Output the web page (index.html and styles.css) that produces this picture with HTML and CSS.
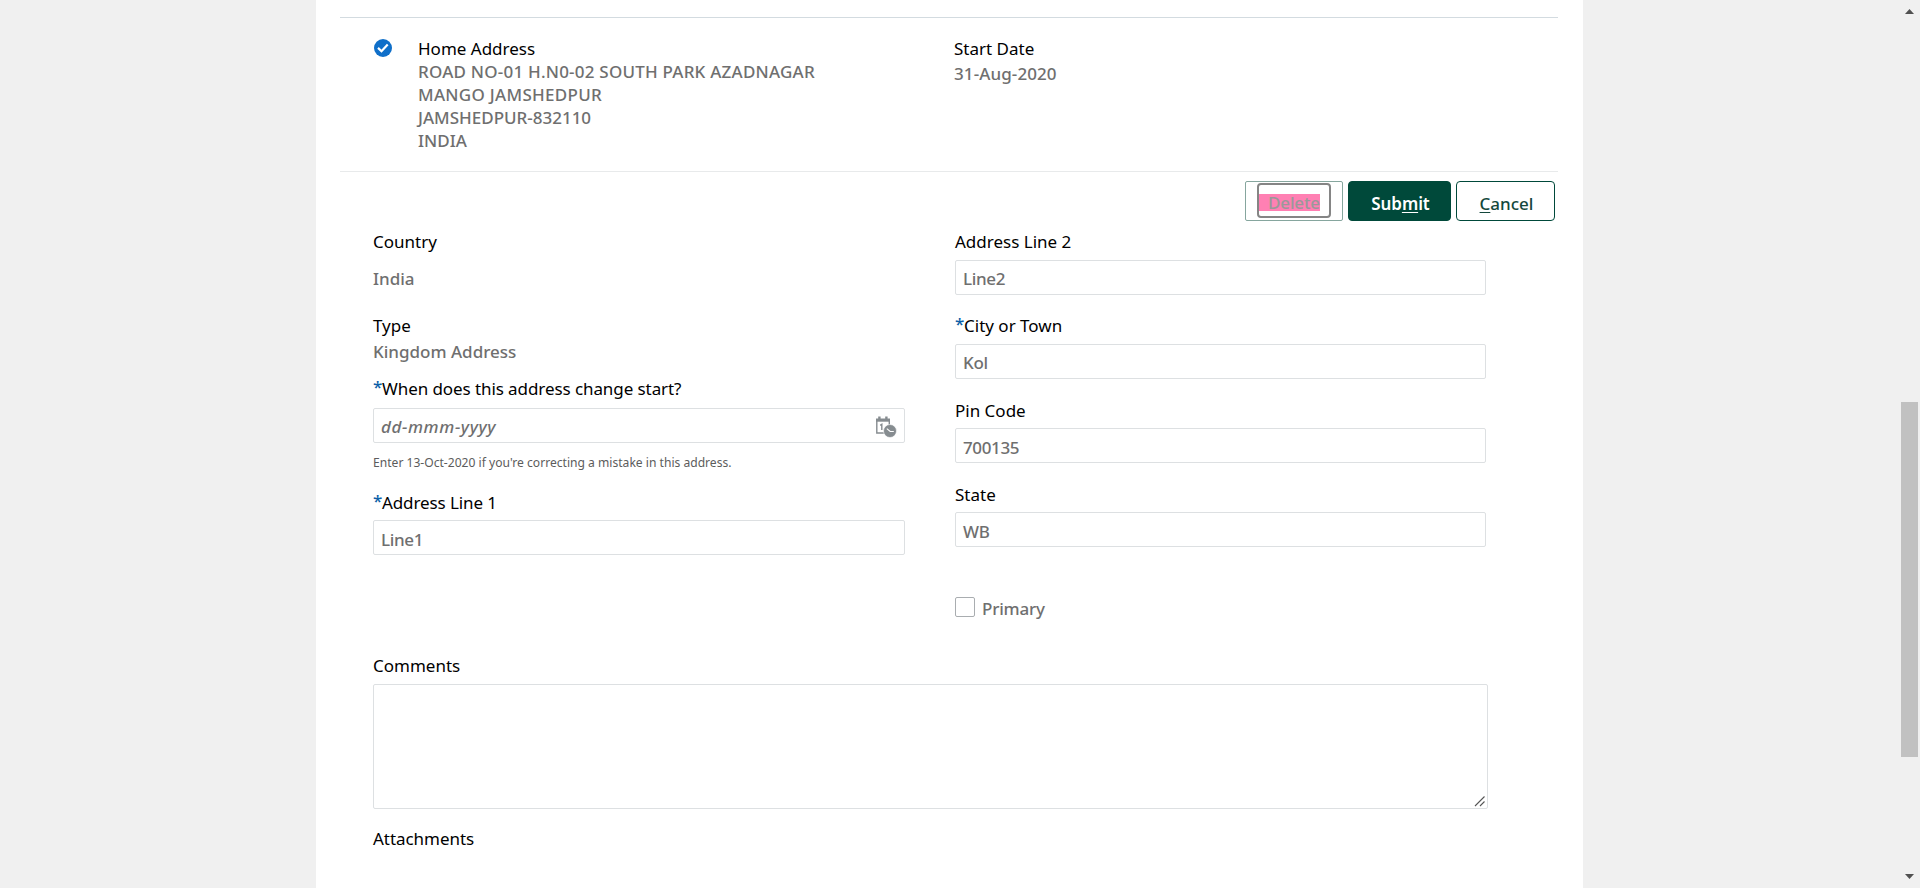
FILE: index.html
```
<!DOCTYPE html>
<html lang="en">
<head>
<meta charset="utf-8">
<title>Contact Info</title>
<link rel="stylesheet" href="styles.css">
</head>
<body>
<main class="page">
  <section class="summary">
    <svg class="check" width="18" height="18" viewBox="0 0 18 18"><circle cx="9" cy="9" r="9" fill="#0f6fc9"/><path d="M4 8.9 7.5 12.3 13.7 5.6" fill="none" stroke="#fff" stroke-width="2.2"/></svg>
    <div class="summary-address">
      <div class="label">Home Address</div>
      <div class="value line ls-road">ROAD NO-01 H.N0-02 SOUTH PARK AZADNAGAR</div>
      <div class="value line ls-mango">MANGO JAMSHEDPUR</div>
      <div class="value line">JAMSHEDPUR-832110</div>
      <div class="value line">INDIA</div>
    </div>
    <div class="summary-date">
      <div class="label">Start Date</div>
      <div class="value date">31-Aug-2020</div>
    </div>
  </section>
  <div class="actions">
    <button class="btn btn-delete" disabled><span class="focus-ring"><span class="mark">Delete</span></span></button>
    <button class="btn btn-submit">Sub<u>m</u>it</button>
    <button class="btn btn-cancel"><u>C</u>ancel</button>
  </div>
  <form class="form">
    <div class="columns">
      <div class="col">
        <div class="label">Country</div>
        <div class="value country">India</div>
        <div class="label">Type</div>
        <div class="value type">Kingdom Address</div>
        <div class="label ls-when"><span class="req">*</span>When does this address change start?</div>
        <div class="field field-date">
          <span>dd-mmm-yyyy</span>
          <svg width="22" height="22" viewBox="0 0 22 22"><path d="M1.8 3v14h8" fill="none" stroke="#868c90" stroke-width="1.4"/><path d="M1 2.5h14v3.2H1z" fill="#868c90"/><path d="M3.2.5h2.4v3H3.200zM10.200.5h2.400v3h-2.400z" fill="#868c90"/><path d="M14.300 5v4M5.200 9.300l1.600-1V14" fill="none" stroke="#868c90" stroke-width="1.400"/><circle cx="15" cy="15" r="6.500" fill="#868c90" stroke="#fff" stroke-width=".6"/><path d="M11.800 12.600l3.400 2.900h3.600" fill="none" stroke="#fff" stroke-width="1.100"/></svg>
        </div>
        <div class="hint">Enter 13-Oct-2020 if you're correcting a mistake in this address.</div>
        <div class="label ls-line1"><span class="req">*</span>Address Line 1</div>
        <div class="field tight low">Line1</div>
      </div>
      <div class="col">
        <div class="label">Address Line 2</div>
        <div class="field tight">Line2</div>
        <div class="label"><span class="req">*</span>City or Town</div>
        <div class="field tight">Kol</div>
        <div class="label low">Pin Code</div>
        <div class="field tight low">700135</div>
        <div class="label low">State</div>
        <div class="field tight low">WB</div>
        <div class="primary"><span class="box"></span>Primary</div>
      </div>
    </div>
    <div class="label">Comments</div>
    <div class="comments">
      <textarea></textarea>
      <svg class="grip" width="12" height="12" viewBox="0 0 12 12"><path d="M1 11 10.500 1.500M6 11l4.500-4.500" fill="none" stroke="#555" stroke-width="1.100"/></svg>
    </div>
    <div class="label ls-attach">Attachments</div>
  </form>
</main>
<aside class="scrollbar">
  <svg width="9" height="5" viewBox="0 0 9 5"><path d="M4.500 0 9 5H0z" fill="#505050"/></svg>
  <div class="thumb"></div>
  <svg width="9" height="5" viewBox="0 0 9 5"><path d="M0 0h9L4.500 5z" fill="#505050"/></svg>
</aside>
</body>
</html>
```
FILE: styles.css
```
* { box-sizing: border-box; }
body {
  margin: 0;
  height: 888px;
  overflow: hidden;
  display: flex;
  background: #f0f0f0;
  font: 500 17px/24px "Noto Sans", sans-serif;
  color: #000;
}
.page {
  width: 1267px;
  height: 888px;
  margin-left: 316px;
  padding: 17px 25px 0 24px;
  background: #fff;
}
.summary {
  display: flex;
  height: 155px;
  padding: 19px 0 0 33px;
  border-top: 1px solid #d3dbe0;
  border-bottom: 1px solid #e8eaeb;
}
.check { margin: 2px 26px 0 1px; }
.summary-address { width: 536px; }
.label { font-weight: 400; }
.value { color: #6f6f6f; }
.summary .label { line-height: 23px; }
.line { line-height: 23px; }
.date { margin-top: 2px; letter-spacing: .1px; }
.ls-road { letter-spacing: .22px; }
.ls-mango { letter-spacing: .3px; }
.ls-when { letter-spacing: -.08px; }
.ls-line1 { letter-spacing: -.1px; }
.ls-attach { letter-spacing: -.05px; }

.actions {
  display: flex;
  justify-content: flex-end;
  gap: 5px;
  height: 49px;
  padding: 9px 3px 0 0;
}
.btn {
  height: 40px;
  padding: 6px 0 0 2px;
  border: 1px solid #00493a;
  border-radius: 4px;
  background: #fff;
  font: inherit;
  color: #14483c;
}
.btn u { text-underline-offset: 2px; text-decoration-thickness: 1px; text-decoration-skip-ink: none; }
.btn-delete { width: 98px; padding: 0 0 1px; border-color: #86a69e; border-radius: 2px; color: #999; }
.focus-ring {
  display: block;
  width: 74px;
  height: 35px;
  margin-left: 11px;
  padding-top: 9px;
  border: 2px solid #858585;
  border-radius: 4px;
}
.mark { display: block; width: 61px; height: 17px; padding-left: 9px; background: #ff80b3; line-height: 17px; letter-spacing: -.15px; text-align: left; }
.btn-submit { width: 103px; background: #00493a; color: #fff; font-weight: 600; letter-spacing: -.1px; }
.btn-cancel { width: 99px; }

.form { padding: 0 0 0 33px; }
.columns { display: flex; gap: 51px; height: 433px; padding-top: 9px; }
.col { width: 531px; }
.col:first-child { width: 532px; margin-right: -1px; }
.country { margin: 13px 0 23px; }
.type { margin: 2px 0 13px; }
.req { display: inline-block; width: 9px; height: 20px; line-height: 20px; font-weight: 500; vertical-align: 2px; margin-top: -4px; letter-spacing: 0; color: #0d5fa8; }
.ls-when, .ls-line1, .col .label { height: 24px; }
.field {
  height: 35px;
  margin: 6px 0 19px;
  padding: 6px 7px 0;
  border: 1px solid #dde0e2;
  border-radius: 2px;
  color: #6f6f6f;
}
.tight { letter-spacing: -.35px; }
.col .label.low { height: 25px; padding-top: 1px; }
.field.low { margin-top: 5px; padding-top: 7px; }
.field-date { display: flex; justify-content: space-between; margin: 7px 0 10px; font-style: italic; letter-spacing: .6px; }
.field-date svg { margin-top: 1px; }
.hint { margin-bottom: 18px; font-size: 12.1px; font-weight: 400; line-height: 20px; color: #5c5c5c; }
.primary { display: flex; align-items: flex-start; gap: 7px; margin-top: 50px; color: #6f6f6f; letter-spacing: -.2px; }
.box { width: 20px; height: 20px; border: 1px solid #a9adb0; border-radius: 2px; }
.comments { position: relative; width: 1115px; height: 125px; margin: 6px 0 18px; }
.comments textarea {
  display: block;
  width: 100%;
  height: 100%;
  border: 1px solid #dde0e2;
  border-radius: 2px;
  background: #fff;
  resize: none;
}
.grip { position: absolute; right: 2px; bottom: 2px; }

.scrollbar { margin-left: 318px; width: 17px; padding: 9px 0; display: flex; flex-direction: column; align-items: center; justify-content: space-between; }
.scrollbar svg { flex: none; }
.thumb { width: 17px; height: 355px; margin-top: 271px; background: #c1c1c1; }
```
